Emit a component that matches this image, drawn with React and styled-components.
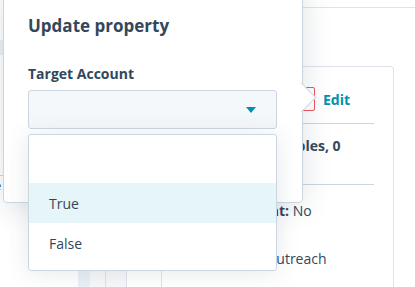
import React from "react";
import styled, { createGlobalStyle } from "styled-components";

const Global = createGlobalStyle`
  html, body { margin: 0; padding: 0; background: #ffffff; }
  body { font-family: "Open Sans", "Noto Sans", Arial, sans-serif; color: #33475b; }
  * { box-sizing: border-box; }
`;

const Page = styled.div`
  position: relative;
  width: 415px;
  height: 287px;
  overflow: hidden;
  background: #ffffff;
  display: grid;
  grid-template-columns: 60px 1fr;
`;

const SideStrip = styled.div`
  display: flex;
  flex-direction: column;
  padding-top: 40px;
`;

const SideBlock = styled.div`
  height: 15px;
  width: 10px;
  background: #eaf0f6;
`;

const SideRule = styled.div`
  margin-top: 120px;
  border-top: 1px solid #cbd6e2;
  width: 20px;
`;

const SideText = styled.span`
  font-size: 13px;
  line-height: 18px;
  color: #33475b;
  margin-left: -6px;
`;

const Main = styled.div`
  display: flex;
  flex-direction: column;
`;

const HeaderBar = styled.div`
  height: 8px;
  border-bottom: 1px solid #dfe3eb;
`;

const Body = styled.div`
  flex: 1;
  display: grid;
  grid-template-columns: 18px 12px 15px 1px 20px 1px 34px 1fr;
  padding-top: 58px;
  padding-right: 21px;
`;

const Shade = styled.div`
  background: ${(p) => p.$bg || "transparent"};
  border-left: ${(p) => (p.$line ? "1px solid #dfe3eb" : "none")};
`;

const Card = styled.div`
  border: 1px solid #dfe3eb;
  border-bottom: none;
  border-radius: 4px 4px 0 0;
  padding: 20px 19px 0 17px;
  display: flex;
  flex-direction: column;
`;

const EditRow = styled.div`
  display: flex;
  justify-content: flex-end;
  align-items: center;
  gap: 8px;
  padding-right: 24px;
  height: 24px;
`;

const ErrorBox = styled.div`
  width: 30px;
  height: 24px;
  border: 1px solid #f2545b;
  border-radius: 2px;
`;

const EditLink = styled.span`
  color: #0091ae;
  font-weight: 700;
  font-size: 14px;
`;

const Divider = styled.div`
  border-top: 1px solid #cbd6e2;
  margin: ${(p) => p.$m || "12px 0"};
`;

const CardText = styled.div`
  font-size: 14px;
  line-height: 20px;
  font-weight: ${(p) => (p.$bold ? 700 : 400)};
  margin-top: ${(p) => p.$mt || "0"};
  white-space: nowrap;
  b { font-weight: 700; }
`;

const Popover = styled.div`
  position: absolute;
  left: 3px;
  top: -10px;
  width: 300px;
  height: 213px;
  background: #ffffff;
  border: 1px solid #cbd6e2;
  border-radius: 0 0 4px 4px;
  box-shadow: 0 2px 30px rgba(45, 62, 80, 0.16);
  padding: 23px 24px 0 24px;
  display: flex;
  flex-direction: column;
`;

const Arrow = styled.div`
  position: absolute;
  left: 287px;
  top: 96px;
  width: 21px;
  height: 21px;
  background: #ffffff;
  border-top: 1px solid #cbd6e2;
  border-right: 1px solid #cbd6e2;
  transform: rotate(45deg);
`;

const Title = styled.h2`
  margin: 0;
  font-size: 17px;
  line-height: 24px;
  font-weight: 700;
  color: #33475b;
`;

const Label = styled.label`
  margin-top: 26px;
  font-size: 14px;
  line-height: 20px;
  font-weight: 700;
  color: #33475b;
`;

const SelectWrap = styled.div`
  position: relative;
  margin-top: 6px;
  width: 249px;
`;

const SelectBox = styled.div`
  height: 39px;
  background: #f5f8fa;
  border: 1px solid #cbd6e2;
  border-radius: 3px;
  display: flex;
  align-items: center;
  justify-content: flex-end;
  padding-right: 20px;
`;

const Caret = styled.div`
  width: 0;
  height: 0;
  border-left: 5px solid transparent;
  border-right: 5px solid transparent;
  border-top: 6px solid #0091ae;
  margin-top: 1px;
`;

const Menu = styled.div`
  position: absolute;
  left: 0;
  top: calc(100% + 5px);
  width: 249px;
  height: 137px;
  background: #ffffff;
  border: 1px solid #cbd6e2;
  border-radius: 3px;
  box-shadow: 0 2px 24px rgba(45, 62, 80, 0.12);
  padding-top: 48px;
  display: flex;
  flex-direction: column;
`;

const Option = styled.div`
  height: 40px;
  display: flex;
  align-items: center;
  padding-left: 20px;
  font-size: 14px;
  color: #33475b;
  background: ${(p) => (p.$active ? "#e5f5f8" : "#ffffff")};
`;

export default function App() {
  return (
    <>
      <Global />
      <Page>
        <SideStrip>
          <SideBlock />
          <SideRule />
          <SideText>e</SideText>
        </SideStrip>
        <Main>
          <HeaderBar />
          <Body>
            <Shade />
            <Shade $bg="#eaf0f6" />
            <Shade $bg="#f7f8fa" />
            <Shade $line />
            <Shade $bg="#f7f8fa" />
            <Shade $line />
            <Shade />
            <Card>
              <EditRow>
                <ErrorBox />
                <EditLink>Edit</EditLink>
              </EditRow>
              <Divider />
              <CardText $bold>Associated examples, 0</CardText>
              <Divider $m="28px 0 0" />
              <CardText $mt="16px">
                <b>Target Account:</b> No
              </CardText>
              <CardText $mt="28px">Lead source: Outreach</CardText>
            </Card>
          </Body>
        </Main>
        <Popover>
          <Arrow />
          <Title>Update property</Title>
          <Label>Target Account</Label>
          <SelectWrap>
            <SelectBox>
              <Caret />
            </SelectBox>
            <Menu>
              <Option $active>True</Option>
              <Option>False</Option>
            </Menu>
          </SelectWrap>
        </Popover>
      </Page>
    </>
  );
}
